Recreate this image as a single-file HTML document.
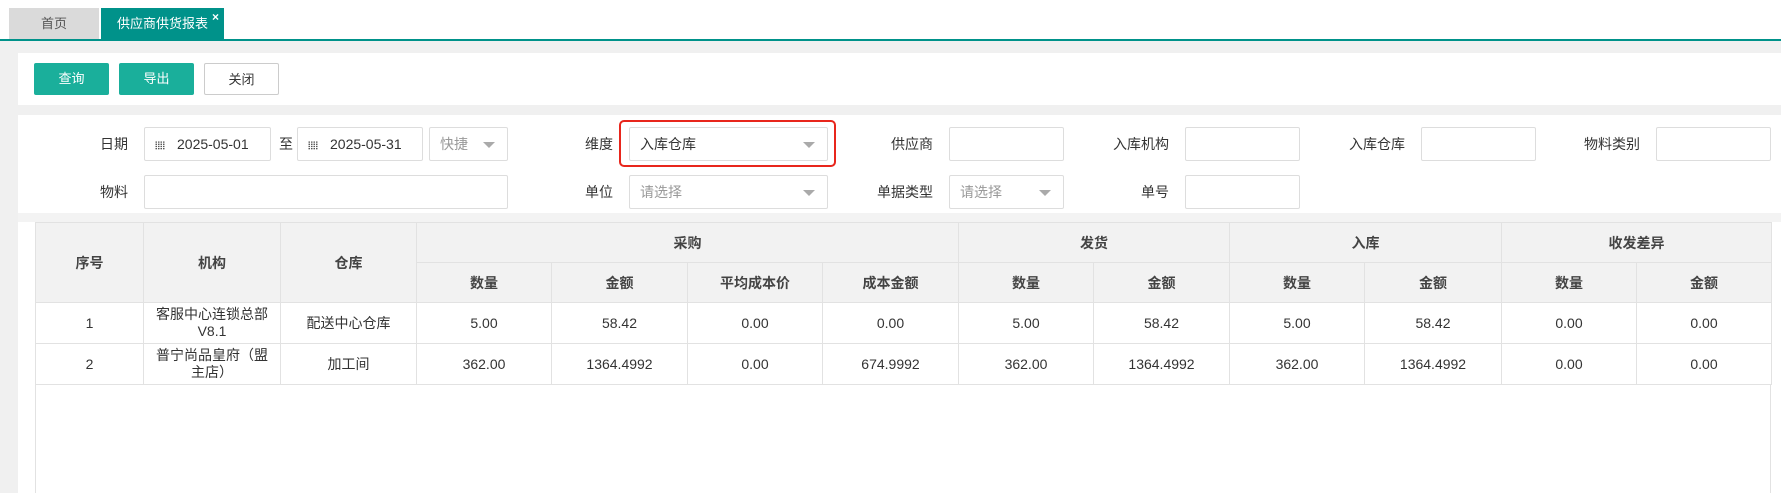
<!DOCTYPE html>
<html><head><meta charset="utf-8"><style>
*{box-sizing:border-box;margin:0;padding:0}
body{width:1781px;height:493px;background:#f0f0f0;font-family:"Liberation Sans","Noto Sans CJK SC",sans-serif;position:relative;overflow:hidden;color:#333}
.a{position:absolute}
.tabbar{left:0;top:0;width:1781px;height:39px;background:#fff}
.tab{top:8px;height:31px;font-size:13px;line-height:31px;text-align:center}
.btn{top:63px;height:32px;width:75px;border-radius:2px;font-size:13px;line-height:32px;text-align:center;color:#fff;background:#1aaf9b}
.lbl{font-size:14px;color:#333;text-align:right;width:80px;line-height:34px;height:34px}
.inp{background:#fff;border:1px solid #ddd;border-radius:2px;height:34px;font-size:14px;line-height:32px;padding-left:10px}
.arr{position:absolute;right:12px;top:14px;width:0;height:0;border-left:6px solid transparent;border-right:6px solid transparent;border-top:6px solid #aaa}
.cal{display:inline-block;width:10px;height:9px;margin-right:12px;vertical-align:-1px;background-image:radial-gradient(#555 0.8px,transparent 0.9px);background-size:2.5px 2.2px}
table{position:absolute;left:35px;top:222px;width:1736px;border-collapse:collapse;font-size:14px;table-layout:fixed}
td,th{border:1px solid #e2e2e2;text-align:center;color:#333}
th{background:#f2f2f2;font-weight:bold;height:40px;color:#444}
td{height:41px;line-height:17px}
</style></head><body>
<div class="a tabbar"></div>
<div class="a tab" style="left:9px;width:90px;background:#dadada;color:#555">首页</div>
<div class="a tab" style="left:101px;width:123px;background:#00928a;color:#fff">供应商供货报表</div>
<div class="a" style="left:212px;top:10px;color:#fff;font-size:12px;font-weight:bold">×</div>
<div class="a" style="left:0;top:39px;width:1781px;height:2px;background:#00928a"></div>
<div class="a" style="left:18px;top:53px;width:1763px;height:52px;background:#fff"></div>
<div class="a btn" style="left:34px">查询</div>
<div class="a btn" style="left:119px">导出</div>
<div class="a btn" style="left:204px;background:#fff;color:#333;border:1px solid #ccc">关闭</div>
<div class="a" style="left:18px;top:115px;width:1763px;height:378px;background:#fff"></div>
<div class="a" style="left:18px;top:213px;width:1763px;height:9px;background:#f3f3f3"></div>

<div class="a lbl" style="left:48px;top:127px">日期</div>
<div class="a inp" style="left:144px;top:127px;width:127px"><span class="cal"></span>2025-05-01</div>
<div class="a lbl" style="left:213px;top:127px;width:80px">至</div>
<div class="a inp" style="left:297px;top:127px;width:126px"><span class="cal"></span>2025-05-31</div>
<div class="a inp" style="left:429px;top:127px;width:79px;color:#999">快捷<span class="arr"></span></div>
<div class="a lbl" style="left:48px;top:175px">物料</div>
<div class="a inp" style="left:144px;top:175px;width:364px"></div>

<div class="a lbl" style="left:533px;top:127px">维度</div>
<div class="a" style="left:619px;top:120px;width:217px;height:47px;border:2px solid #e8261c;border-radius:5px"></div>
<div class="a inp" style="left:629px;top:127px;width:199px">入库仓库<span class="arr"></span></div>
<div class="a lbl" style="left:533px;top:175px">单位</div>
<div class="a inp" style="left:629px;top:175px;width:199px;color:#999">请选择<span class="arr"></span></div>

<div class="a lbl" style="left:853px;top:127px">供应商</div>
<div class="a inp" style="left:949px;top:127px;width:115px"></div>
<div class="a lbl" style="left:853px;top:175px">单据类型</div>
<div class="a inp" style="left:949px;top:175px;width:115px;color:#999">请选择<span class="arr"></span></div>
<div class="a lbl" style="left:1089px;top:127px">入库机构</div>
<div class="a inp" style="left:1185px;top:127px;width:115px"></div>
<div class="a lbl" style="left:1089px;top:175px">单号</div>
<div class="a inp" style="left:1185px;top:175px;width:115px"></div>
<div class="a lbl" style="left:1325px;top:127px">入库仓库</div>
<div class="a inp" style="left:1421px;top:127px;width:115px"></div>
<div class="a lbl" style="left:1560px;top:127px">物料类别</div>
<div class="a inp" style="left:1656px;top:127px;width:115px"></div>

<div class="a" style="left:35px;top:384px;width:1px;height:109px;background:#e2e2e2"></div>
<div class="a" style="left:1770px;top:384px;width:1px;height:109px;background:#e2e2e2"></div>
<table>
<colgroup><col style="width:108px"><col style="width:137px"><col style="width:136px"><col style="width:135px"><col style="width:136px"><col style="width:135px"><col style="width:136px"><col style="width:135px"><col style="width:136px"><col style="width:135px"><col style="width:137px"><col style="width:135px"><col style="width:135px"></colgroup>
<tr><th rowspan="2">序号</th><th rowspan="2">机构</th><th rowspan="2">仓库</th><th colspan="4">采购</th><th colspan="2">发货</th><th colspan="2">入库</th><th colspan="2">收发差异</th></tr>
<tr><th>数量</th><th>金额</th><th>平均成本价</th><th>成本金额</th><th>数量</th><th>金额</th><th>数量</th><th>金额</th><th>数量</th><th>金额</th></tr>
<tr><td>1</td><td>客服中心连锁总部<br>V8.1</td><td>配送中心仓库</td><td>5.00</td><td>58.42</td><td>0.00</td><td>0.00</td><td>5.00</td><td>58.42</td><td>5.00</td><td>58.42</td><td>0.00</td><td>0.00</td></tr>
<tr><td>2</td><td>普宁尚品皇府（盟<br>主店）</td><td>加工间</td><td>362.00</td><td>1364.4992</td><td>0.00</td><td>674.9992</td><td>362.00</td><td>1364.4992</td><td>362.00</td><td>1364.4992</td><td>0.00</td><td>0.00</td></tr>
</table>
</body></html>
